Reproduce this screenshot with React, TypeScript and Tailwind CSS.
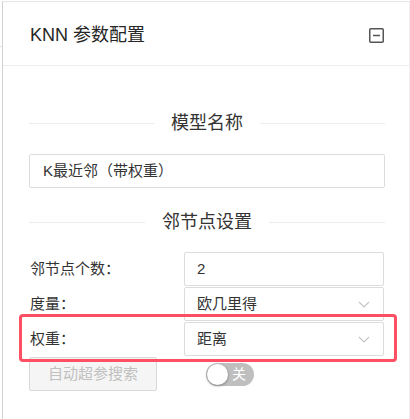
import React from "react";

function Chevron() {
  return (
    <svg width="12" height="7" viewBox="0 0 12 7" fill="none">
      <polyline points="1,1 6,6 11,1" stroke="#c4c4c4" strokeWidth="1.1" />
    </svg>
  );
}

function SectionTitle({ text }: { text: string }) {
  return (
    <div className="flex items-center">
      <div className="flex-1 h-px bg-[#ececec]" />
      <div className="px-[17px] text-[18px] leading-[24px] text-[#333]">{text}</div>
      <div className="flex-1 h-px bg-[#ececec]" />
    </div>
  );
}

function Row({ label, children }: { label: string; children: React.ReactNode }) {
  return (
    <div className="flex items-center h-[34px]">
      <div className="w-[155px] pl-[1px] text-[15px] text-[#333]">{label}</div>
      <div className="flex-1 h-full border border-[#dcdcdc] rounded-[2px] flex items-center pl-[12px] pr-[13px] text-[15px] text-[#333]">
        {children}
      </div>
    </div>
  );
}

export default function App() {
  return (
    <div className="relative w-[410px] h-[419px] bg-white overflow-hidden font-['Liberation_Sans','Noto_Sans_CJK_SC',sans-serif]">
      <div className="h-[1px]" />
      <div className="flex h-[418px]">
        <div className="w-[2px] shrink-0 pt-[45px]">
          <div className="h-px bg-[#e0e0e0]" />
        </div>
        <div className="flex-1 border-t border-t-[#e6e6e6] border-l border-l-[#d2d2d2] border-r border-r-[#efefef] flex flex-col">
          <div className="flex items-center justify-between pl-[27px] pr-[25px] pt-[21px] pb-[18px] border-b border-[#ededed]">
            <div className="text-[18px] leading-[24px] text-[#262626]">KNN 参数配置</div>
            <svg width="15" height="15" viewBox="0 0 15 15" fill="none">
              <rect x="0.75" y="0.75" width="13.5" height="13.5" stroke="#555" strokeWidth="1.5" rx="1" />
              <line x1="4" y1="7.5" x2="11" y2="7.5" stroke="#555" strokeWidth="1.5" />
            </svg>
          </div>
          <div className="flex flex-col pl-[26px] pr-[24px]">
            <div className="mt-[45px]">
              <SectionTitle text="模型名称" />
            </div>
            <div className="mt-[19px] h-[34px] border border-[#dcdcdc] rounded-[2px] flex items-center pl-[13px] text-[15px] text-[#333]">
              K最近邻（带权重）
            </div>
            <div className="mt-[22px]">
              <SectionTitle text="邻节点设置" />
            </div>
            <div className="mt-[18px] flex flex-col gap-[1px] pr-[1px]">
              <Row label="邻节点个数：">
                <span>2</span>
              </Row>
              <Row label="度量：">
                <span className="flex-1">欧几里得</span>
                <Chevron />
              </Row>
              <Row label="权重：">
                <span className="flex-1">距离</span>
                <Chevron />
              </Row>
            </div>
            <div className="mt-[1px] flex items-center">
              <div className="w-[128px] h-[34px] border border-[#d9d9d9] rounded-[2px] bg-[#f5f5f5] flex items-center justify-center text-[15px] text-[#c0c0c0]">
                自动超参搜索
              </div>
              <div className="ml-[49px] w-[48px] h-[23px] rounded-full bg-[#bfbfbf] flex items-center pl-[1px] pr-[8px] justify-between">
                <div className="w-[21px] h-[21px] rounded-full bg-white shadow-[0_1px_3px_rgba(0,0,0,0.35)]" />
                <span className="text-[14px] leading-none text-white">关</span>
              </div>
            </div>
          </div>
        </div>
      </div>
      <div className="absolute left-[19px] top-[314px] w-[378px] h-[48px] border-[3px] border-[#ff4f62] rounded-[4px] pointer-events-none" />
    </div>
  );
}
